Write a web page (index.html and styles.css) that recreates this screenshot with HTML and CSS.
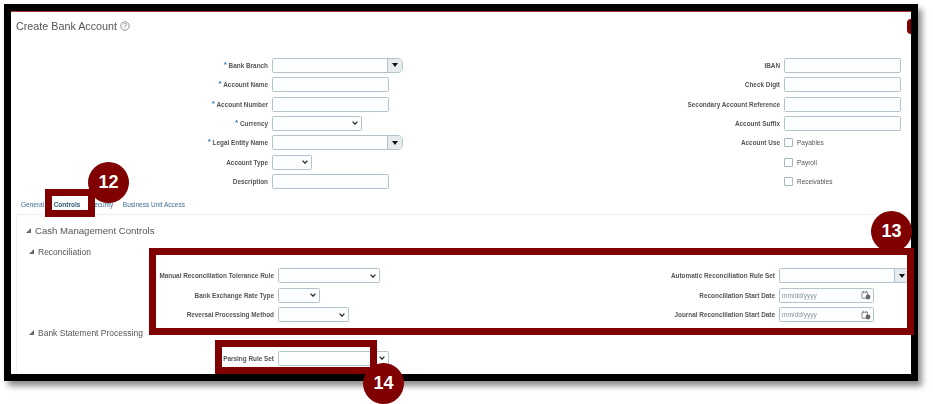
FILE: index.html
```html
<!DOCTYPE html>
<html lang="en">
<head>
<meta charset="utf-8">
<title>Create Bank Account</title>
<link rel="stylesheet" href="styles.css">
</head>
<body>
<div class="stage">
  <div class="frame">
    <div class="page">
      <header class="title-row">
        <h1 class="title">Create Bank Account</h1>
        <svg class="help" viewBox="0 0 10 10" width="10" height="10"><circle cx="5" cy="5" r="4.2" fill="none" stroke="#666" stroke-width=".7"/><text x="5" y="7.2" text-anchor="middle" class="help-q">?</text></svg>
      </header>

      <div class="form top-form">
        <div class="label"><span class="req">*</span> Bank Branch</div>
        <div class="combo w131"><span class="combo-field"></span><span class="combo-btn"><i class="tri"></i></span></div>
        <div class="label">IBAN</div>
        <input class="field w117" type="text">

        <div class="label"><span class="req">*</span> Account Name</div>
        <input class="field w117" type="text">
        <div class="label">Check Digit</div>
        <input class="field w117" type="text">

        <div class="label"><span class="req">*</span> Account Number</div>
        <input class="field w117" type="text">
        <div class="label">Secondary Account Reference</div>
        <input class="field w117" type="text">

        <div class="label"><span class="req">*</span> Currency</div>
        <div class="select w90"><svg class="chev" viewBox="0 0 6 4" width="6" height="4"><path d="M.6.6 3 3.2 5.4.6" fill="none" stroke="#222" stroke-width="1.2"/></svg></div>
        <div class="label">Account Suffix</div>
        <input class="field w117" type="text">

        <div class="label"><span class="req">*</span> Legal Entity Name</div>
        <div class="combo w131"><span class="combo-field"></span><span class="combo-btn"><i class="tri"></i></span></div>
        <div class="label">Account Use</div>
        <label class="check"><span class="box"></span>Payables</label>

        <div class="label">Account Type</div>
        <div class="select w40"><svg class="chev" viewBox="0 0 6 4" width="6" height="4"><path d="M.6.6 3 3.2 5.4.6" fill="none" stroke="#222" stroke-width="1.2"/></svg></div>
        <div class="label"></div>
        <label class="check"><span class="box"></span>Payroll</label>

        <div class="label">Description</div>
        <input class="field w117" type="text">
        <div class="label"></div>
        <label class="check"><span class="box"></span>Receivables</label>
      </div>

      <nav class="tabs">
        <a class="tab">General</a>
        <a class="tab active">Controls</a>
        <a class="tab">Security</a>
        <a class="tab">Business Unit Access</a>
      </nav>

      <section class="panel">
        <h2 class="h-main"><i class="disc"></i>Cash Management Controls</h2>
        <h3 class="h-sub recon"><i class="disc"></i>Reconciliation</h3>
        <div class="form recon-form">
          <div class="label">Manual Reconciliation Tolerance Rule</div>
          <div class="select w102"><svg class="chev" viewBox="0 0 6 4" width="6" height="4"><path d="M.6.6 3 3.2 5.4.6" fill="none" stroke="#222" stroke-width="1.2"/></svg></div>
          <div class="label">Automatic Reconciliation Rule Set</div>
          <div class="combo w131"><span class="combo-field"></span><span class="combo-btn"><i class="tri"></i></span></div>

          <div class="label">Bank Exchange Rate Type</div>
          <div class="select w42"><svg class="chev" viewBox="0 0 6 4" width="6" height="4"><path d="M.6.6 3 3.2 5.4.6" fill="none" stroke="#222" stroke-width="1.2"/></svg></div>
          <div class="label">Reconciliation Start Date</div>
          <div class="date"><span>mm/dd/yyyy</span><svg viewBox="0 0 10 10" width="10" height="10"><path d="M1 2.2h5.6v6H1zM2.4 .8v2.4M5.2 .8v2.4" fill="none" stroke="#777" stroke-width=".8"/><circle cx="7" cy="7" r="2.4" fill="#666"/></svg></div>

          <div class="label">Reversal Processing Method</div>
          <div class="select w71"><svg class="chev" viewBox="0 0 6 4" width="6" height="4"><path d="M.6.6 3 3.2 5.4.6" fill="none" stroke="#222" stroke-width="1.2"/></svg></div>
          <div class="label">Journal Reconciliation Start Date</div>
          <div class="date"><span>mm/dd/yyyy</span><svg viewBox="0 0 10 10" width="10" height="10"><path d="M1 2.2h5.6v6H1zM2.4 .8v2.4M5.2 .8v2.4" fill="none" stroke="#777" stroke-width=".8"/><circle cx="7" cy="7" r="2.4" fill="#666"/></svg></div>
        </div>
        <h3 class="h-sub statement"><i class="disc"></i>Bank Statement Processing</h3>
        <div class="form parse-form">
          <div class="label">Parsing Rule Set</div>
          <div class="select w111"><svg class="chev" viewBox="0 0 6 4" width="6" height="4"><path d="M.6.6 3 3.2 5.4.6" fill="none" stroke="#222" stroke-width="1.2"/></svg></div>
        </div>
      </section>
    </div>
  </div>

  <div class="mark blob"></div>
  <div class="mark num n13">13</div>
  <div class="mark box-a b12"></div>
  <div class="mark box-a b13"></div>
  <div class="mark box-a b14"></div>
  <div class="mark num n12">12</div>
  <div class="mark num n14">14</div>
</div>
</body>
</html>
```
FILE: styles.css
```css
* { box-sizing: border-box; }
html, body { margin: 0; background: #fff; }
body { width: 933px; height: 404px; overflow: hidden; padding: 4px 0 0 4px; font-family: "Liberation Sans", Arial, sans-serif; }

.stage { position: relative; width: 914px; height: 377px; }
.frame { width: 914px; height: 377px; border: 7px solid #000; background: #fff; overflow: hidden; box-shadow: 4px 5px 6px rgba(0,0,0,.45); }
.page { height: 363px; overflow: hidden; border-top: 1.5px solid #a8383c; filter: blur(.4px); }

.title-row { height: 43.8px; padding: 6px 0 0 5px; display: flex; gap: 3px; align-items: flex-start; }
.title { margin: 0; font-size: 10.75px; line-height: 16px; font-weight: 400; color: #555; white-space: nowrap; }
.help { margin-top: 3px; }
.help-q { font: 7px "Liberation Sans", sans-serif; fill: #666; }

.form { display: grid; column-gap: 4px; grid-auto-rows: 19.33px; align-items: center; }
.top-form { grid-template-columns: 257px 224px 280px 1fr; }
.recon-form { grid-template-columns: 257px 218px 275px 1fr; margin-top: 8.5px; grid-auto-rows: 19.4px; }
.parse-form { grid-template-columns: 257px 1fr; margin-top: 10px; }

.label { font-size: 6.4px; font-weight: 700; color: #555; text-align: right; white-space: nowrap; }
.req { color: #2f7fc1; font-size: 8px; line-height: 6px; vertical-align: 1px; }

.field, .select, .date, .combo { height: 15px; background: #fbfdfe; border: 1px solid #b4c3cb; border-radius: 1.5px; padding: 0; margin: 0; }
.w117 { width: 117px; }
.w90 { width: 90px; }
.w40 { width: 40px; }
.w42 { width: 42px; }
.w71 { width: 71px; }
.w102 { width: 102px; }
.w111 { width: 111px; }
.w131 { width: 131px; }

.select { display: flex; align-items: center; justify-content: flex-end; padding-right: 3px; }
.combo { display: flex; border-radius: 1.5px 5px 5px 1.5px; overflow: hidden; }
.combo-field { flex: 1; border-right: 1px solid #b4c3cb; }
.combo-btn { width: 14px; background: #e6ebee; display: flex; align-items: center; justify-content: center; }
.tri { width: 0; height: 0; border-left: 3px solid transparent; border-right: 3px solid transparent; border-top: 4px solid #111; }

.date { width: 95px; display: flex; align-items: center; justify-content: space-between; padding: 0 2px 0 2px; font-size: 6.5px; color: #8a8f93; }

.check { display: flex; align-items: center; gap: 4px; font-size: 6.5px; color: #555; white-space: nowrap; }
.box { width: 9px; height: 9px; background: #fbfdfe; border: 1px solid #a9b6bd; border-radius: 1px; }

.tabs { height: 22.5px; padding: 4px 0 0 10px; display: flex; align-items: center; gap: 9.5px; font-size: 6.5px; color: #3e6d92; }
.tab.active { font-weight: 700; color: #2f5878; }

.panel { margin-left: 5px; height: 170px; border-top: 1px solid #eef1f4; border-left: 1px solid #eef1f4; }
.h-main, .h-sub { margin: 0; font-weight: 400; color: #555; white-space: nowrap; display: flex; align-items: center; }
.h-main { font-size: 9.6px; line-height: 14px; margin-top: 9px; padding-left: 9px; gap: 4px; }
.h-sub { font-size: 8.5px; line-height: 12px; padding-left: 12px; gap: 4px; }
.recon { margin-top: 8px; }
.statement { margin-top: 2.5px; }
.disc { width: 0; height: 0; border-left: 5px solid transparent; border-bottom: 5px solid #666; }

.mark { position: absolute; }
.num { width: 41px; height: 41px; border-radius: 50%; background: #800000; color: #fff; font-size: 18px; font-weight: 700; line-height: 41px; text-align: center; }
.n12 { left: 84px; top: 158px; }
.n13 { left: 867px; top: 207px; }
.n14 { left: 359px; top: 359px; }
.box-a { border: 7px solid #800000; }
.b12 { left: 41px; top: 185px; width: 50px; height: 28px; }
.b13 { left: 145px; top: 244px; width: 765px; height: 87px; }
.b14 { left: 211px; top: 336px; width: 162px; height: 34px; }
.blob { left: 903px; top: 15px; width: 4px; height: 15px; background: #800000; border-radius: 4px 0 0 4px; }
```
